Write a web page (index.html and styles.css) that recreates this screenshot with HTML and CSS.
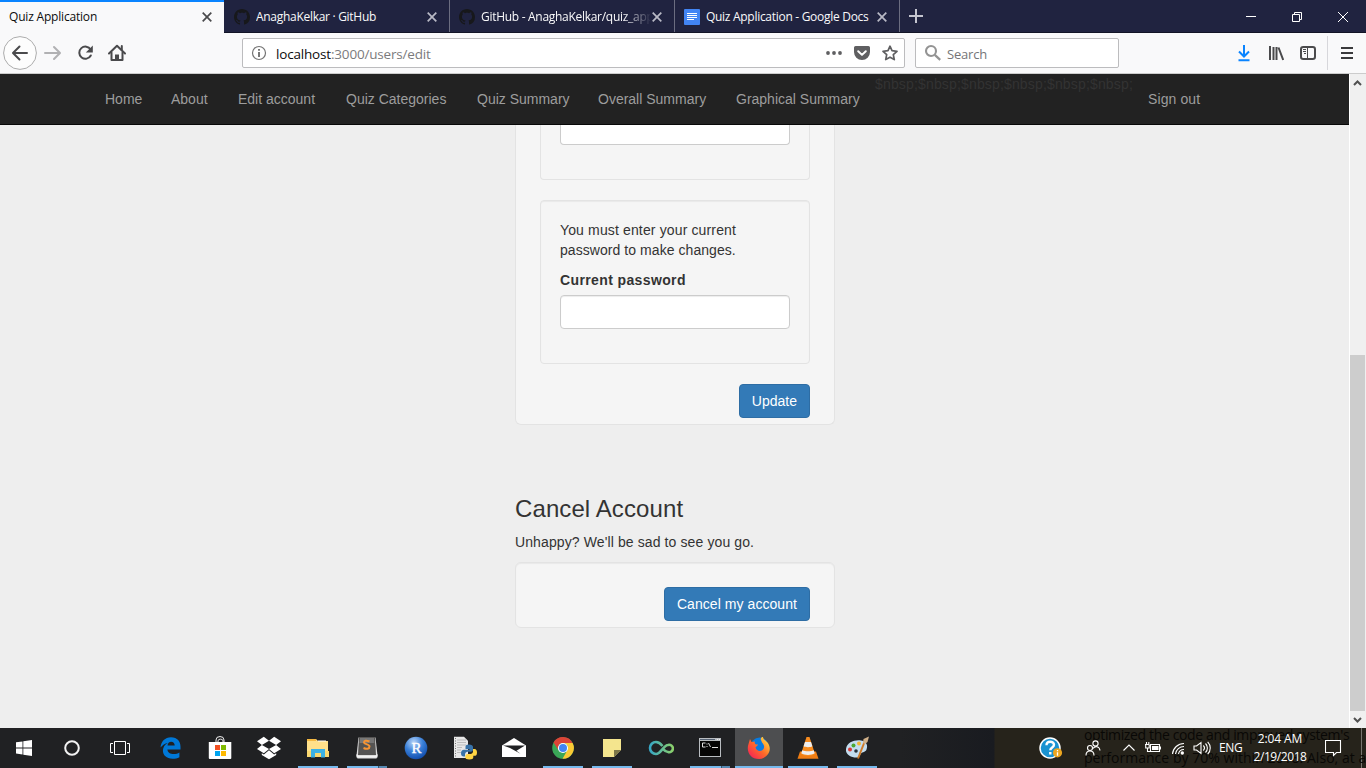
FILE: index.html
```html
<!DOCTYPE html>
<html lang="en">
<head>
<meta charset="utf-8">
<title>Quiz Application</title>
<link rel="stylesheet" href="styles.css">
</head>
<body>
<div class="desktop">
  <header class="tabstrip">
    <div class="tab tab-active"><span class="tab-title t1">Quiz Application</span><svg class="tab-close" width="10" height="10" viewBox="0 0 10 10"><path d="M.7.7l8.6 8.6M9.3.7L.7 9.3"/></svg></div>
    <div class="tab"><svg class="favicon" width="16" height="16" viewBox="0 0 16 16"><path class="octo" d="M8 0C3.58 0 0 3.58 0 8c0 3.54 2.29 6.53 5.47 7.59.4.07.55-.17.55-.38 0-.19-.01-.82-.01-1.49-2.01.37-2.53-.49-2.69-.94-.09-.23-.48-.94-.82-1.13-.28-.15-.68-.52-.01-.53.63-.01 1.08.58 1.23.82.72 1.21 1.87.87 2.33.66.07-.52.28-.87.51-1.07-1.78-.2-3.64-.89-3.64-3.95 0-.87.31-1.59.82-2.15-.08-.2-.36-1.02.08-2.12 0 0 .67-.21 2.2.82.64-.18 1.32-.27 2-.27s1.36.09 2 .27c1.53-1.04 2.2-.82 2.2-.82.44 1.1.16 1.92.08 2.12.51.56.82 1.27.82 2.15 0 3.07-1.87 3.75-3.65 3.95.29.25.54.73.54 1.48 0 1.07-.01 1.93-.01 2.2 0 .21.15.46.55.38A8.01 8.01 0 0 0 16 8c0-4.42-3.58-8-8-8z"/></svg><span class="tab-title t2">AnaghaKelkar · GitHub</span><svg class="tab-close" width="10" height="10" viewBox="0 0 10 10"><path d="M.7.7l8.6 8.6M9.3.7L.7 9.3"/></svg></div>
    <div class="tab"><svg class="favicon" width="16" height="16" viewBox="0 0 16 16"><path class="octo" d="M8 0C3.58 0 0 3.58 0 8c0 3.54 2.29 6.53 5.47 7.59.4.07.55-.17.55-.38 0-.19-.01-.82-.01-1.49-2.01.37-2.53-.49-2.69-.94-.09-.23-.48-.94-.82-1.13-.28-.15-.68-.52-.01-.53.63-.01 1.08.58 1.23.82.72 1.21 1.87.87 2.33.66.07-.52.28-.87.51-1.07-1.78-.2-3.64-.89-3.64-3.95 0-.87.31-1.59.82-2.15-.08-.2-.36-1.02.08-2.12 0 0 .67-.21 2.2.82.64-.18 1.32-.27 2-.27s1.36.09 2 .27c1.53-1.04 2.2-.82 2.2-.82.44 1.1.16 1.92.08 2.12.51.56.82 1.27.82 2.15 0 3.07-1.87 3.75-3.65 3.95.29.25.54.73.54 1.48 0 1.07-.01 1.93-.01 2.2 0 .21.15.46.55.38A8.01 8.01 0 0 0 16 8c0-4.42-3.58-8-8-8z"/></svg><span class="tab-title fade t3">GitHub - AnaghaKelkar/quiz_app</span><svg class="tab-close" width="10" height="10" viewBox="0 0 10 10"><path d="M.7.7l8.6 8.6M9.3.7L.7 9.3"/></svg></div>
    <div class="tab"><svg class="favicon" width="16" height="16" viewBox="0 0 16 16"><rect width="16" height="16" rx="1" fill="#4285f4"/><path d="M3 4.500h10M3 6.500h10M3 8.500h10M3 10.500h7" stroke="#fff"/></svg><span class="tab-title t4">Quiz Application - Google Docs</span><svg class="tab-close" width="10" height="10" viewBox="0 0 10 10"><path d="M.7.7l8.6 8.6M9.3.7L.7 9.3"/></svg></div>
    <svg class="new-tab" width="14" height="14" viewBox="0 0 14 14"><path d="M7 0v14M0 7h14" stroke="#c4c5d0" stroke-width="2"/></svg>
    <div class="window-controls">
      <svg width="46" height="32" viewBox="0 0 46 32"><path d="M18 16.500h10"/></svg>
      <svg width="46" height="32" viewBox="0 0 46 32"><path d="M18.500 14.500h7v7h-7zM20.500 14v-1.500h7v7H26"/></svg>
      <svg width="46" height="32" viewBox="0 0 46 32"><path d="M18 12l10 10M28 12l-10 10"/></svg>
    </div>
  </header>

  <div class="toolbar">
    <div class="nav-buttons">
      <svg width="34" height="34" viewBox="0 0 34 34"><circle cx="17" cy="17" r="16.400" fill="#fdfdfd" stroke="#acacac"/><path d="M24 17H10.500M16.500 10.500L10 17l6.500 6.500" class="ink"/></svg>
      <svg width="32" height="34" viewBox="0 0 32 34"><path d="M8 17h14.500M17 11l6 6-6 6" class="ink pale"/></svg>
      <svg width="32" height="34" viewBox="0 0 32 34"><path d="M21.600 13.500A6.100 6.100 0 1 0 21.800 19.500" class="ink"/><path d="M23.800 9.500v7h-7z" fill="#4a4a4c"/></svg>
      <svg width="32" height="34" viewBox="0 0 32 34"><path d="M8 17.500L16 9.800l8 7.700" class="ink"/><path d="M10.500 16.500v7.500h11v-7.500M20.800 10v4" class="ink"/><path d="M14 18.500h4V24h-4z" fill="#4a4a4c"/></svg>
    </div>
    <div class="urlbar">
      <svg width="16" height="16" viewBox="0 0 16 16"><circle cx="8" cy="8" r="6.500" fill="none" stroke="#737373" stroke-width="1.200"/><path d="M8 4v1.700M8 7v5" stroke="#606060" stroke-width="1.700"/></svg>
      <span class="address"><b>localhost</b>:3000/users/edit</span>
      <div class="url-actions">
        <svg width="16" height="16" viewBox="0 0 16 16"><g fill="#5f5f61"><circle cx="2" cy="8" r="1.900"/><circle cx="8" cy="8" r="1.900"/><circle cx="14" cy="8" r="1.900"/></g></svg>
        <svg width="16" height="16" viewBox="0 0 16 16"><path d="M1.600 1h12.800A1.600 1.600 0 0 1 16 2.600V7a8 8 0 0 1-16 0V2.600A1.600 1.600 0 0 1 1.600 1z" fill="#5f5f61"/><path d="M4.200 6.200L8 9.900l3.800-3.700" fill="none" stroke="#fff" stroke-width="2" stroke-linecap="round" stroke-linejoin="round"/></svg>
        <svg width="16" height="16" viewBox="0 0 16 16"><path d="M8 1.200l2 4.500 5 .6-3.700 3.300 1 5L8 12.200l-4.300 2.400 1-5L1 6.300l5-.6z" fill="none" stroke="#5f5f61" stroke-width="1.700" stroke-linejoin="round"/></svg>
      </div>
    </div>
    <div class="searchbar">
      <svg width="18" height="18" viewBox="0 0 18 18"><circle cx="7" cy="7" r="5" fill="none" stroke="#939393" stroke-width="2.100"/><path d="M10.800 10.800l5.400 5" stroke="#939393" stroke-width="2.300"/></svg>
      <span>Search</span>
    </div>
    <div class="tools">
      <svg width="16" height="18" viewBox="0 0 16 18"><path d="M8 1v11M3 7.500l5 5 5-5M2.500 16.200h11" fill="none" stroke="#0a84ff" stroke-width="2"/></svg>
      <svg width="16" height="18" viewBox="0 0 16 18"><path d="M2 2v14M5.500 3v13M8.500 3v13M10.500 3.500L15.200 16" fill="none" stroke="#4a4a4c" stroke-width="2"/></svg>
      <svg width="16" height="18" viewBox="0 0 16 18"><rect x="1" y="3" width="14" height="12" rx="2.200" fill="none" stroke="#4a4a4c" stroke-width="2"/><path d="M7.500 3v12M3 5.500h3M3 7.500h3M4 9.500h2" stroke="#4a4a4c"/></svg>
    </div>
    <div class="menu-button"><svg width="14" height="14" viewBox="0 0 14 14"><path d="M1 2h12M1 7h12M1 12h12" stroke="#3a3a3c" stroke-width="2"/></svg></div>
  </div>

  <div class="viewport">
    <div class="page">
      <nav class="navbar">
        <a class="n1">Home</a><a class="n2">About</a><a class="n3">Edit account</a><a class="n4">Quiz Categories</a><a class="n5">Quiz Summary</a><a class="n6">Overall Summary</a><a class="n7">Graphical Summary</a><span class="stray">$nbsp;$nbsp;$nbsp;$nbsp;$nbsp;$nbsp;</span><a class="n8">Sign out</a>
      </nav>
      <main class="content">
        <section class="panel panel-form">
          <div class="well well-cut"><div class="input input-cut"></div></div>
          <div class="well">
            <p>You must enter your current<br>password to make changes.</p>
            <label>Current password</label>
            <div class="input"></div>
          </div>
          <button class="btn">Update</button>
        </section>
        <h3>Cancel Account</h3>
        <p class="sad">Unhappy? We'll be sad to see you go.</p>
        <section class="panel panel-cancel"><button class="btn btn-cancel">Cancel my account</button></section>
      </main>
    </div>
    <div class="scrollbar">
      <svg width="15" height="17" viewBox="0 0 15 17"><path d="M4 11l3.500-3.500L11 11"/></svg>
      <div class="thumb"></div>
      <svg width="15" height="17" viewBox="0 0 15 17"><path d="M4 7l3.500 3.500L11 7"/></svg>
    </div>
  </div>

  <footer class="taskbar">
    <div class="start-group">
      <div class="slot"><svg width="16" height="16" viewBox="0 0 16 16"><path d="M0 2.300l6.500-.9v6.100H0zM7.300 1.300L16 0v7.500H7.300zM0 8.400h6.500v6.100L0 13.600zM7.300 8.400H16V16l-8.700-1.300z" fill="#fff"/></svg></div>
      <div class="slot"><svg width="16" height="16" viewBox="0 0 16 16"><circle cx="8" cy="8" r="6.800" fill="none" stroke="#f2f2f2" stroke-width="2"/></svg></div>
      <div class="slot"><svg width="20" height="16" viewBox="0 0 20 16"><path d="M4.500 1.500h11v13h-11zM3 3.500H.5v9H3M17 3.500h2.500v9H17" fill="none" stroke="#fff"/></svg></div>
    </div>
    <div class="app-group">
      <div class="slot"><svg width="24" height="24" viewBox="0 0 24 24"><path d="M1.500 11.500C2.200 5.500 6 1.300 12 1.300c6.500 0 9.500 4.500 9.500 9.400v2.800H8.400c.2 3.200 3 4.500 6.200 4.500 2.400 0 4.200-.6 5.800-1.600v4.800c-2 1.100-4.200 1.600-6.900 1.600-6 0-9.600-3.500-9.600-8.200 0-3.400 2-6.100 5-7.600-3 .4-5.500 2.200-7.400 4.500zm7-2h7.200c0-2.500-1.400-3.800-3.600-3.800-2 0-3.300 1.500-3.600 3.800z" fill="#0078d7"/></svg></div>
      <div class="slot"><svg width="24" height="24" viewBox="0 0 24 24"><path d="M8 6V4a4 3.500 0 0 1 8 0v2M10 6V4.500a3 3 0 0 1 5 0V6" fill="none" stroke="#eee"/><path d="M.8 6h22.500v16a1 1 0 0 1-1 1H1.800a1 1 0 0 1-1-1z" fill="#fff"/><path d="M7 9h5v5H7z" fill="#f25022"/><path d="M13 9h5v5h-5z" fill="#7fba00"/><path d="M7 15h5v5H7z" fill="#00a4ef"/><path d="M13 15h5v5h-5z" fill="#ffb900"/></svg></div>
      <div class="slot"><svg width="24" height="24" viewBox="0 0 24 24"><path d="M6.800.8L0 5.200 4.900 9 12 4.800zM17.200.8L12 4.800 19.100 9 24 5.200zM4.900 9L0 12.900l6.800 4.400L12 13zM19.100 9L12 13l5.200 4.300L24 12.900zM12 14.300l-5.100 4.200-2.100-1.300v1.700l7.200 4.300 7.200-4.300v-1.700l-2.100 1.300z" fill="#fff"/></svg></div>
      <div class="slot run"><svg width="24" height="24" viewBox="0 0 24 24"><path d="M1 3h9l2 2h10v16H1z" fill="#ffe08a"/><path d="M1 5V3h9v2z" fill="#f5b942"/><path d="M12 5h8" stroke="#fff"/><path d="M1 15h22v6H1z" fill="#fad870"/><path d="M5 13h14v8.500h-4V17H9v4.500H5z" fill="#3bb1e5"/></svg></div>
      <div class="slot run multi"><svg width="24" height="24" viewBox="0 0 24 24"><path d="M3.500 1.500h17l2 18-1 3h-19l-1-3z" fill="#ddd"/><path d="M4 1h16l1 18H3z" fill="#555453"/><path d="M5 2h14l.3 5H4.600z" fill="#777"/><path d="M1.500 18l2 2h17l2-2v3.500h-21z" fill="#f3f3f3"/><path d="M14.500 5.500C11 4 9 4.700 9 6.500s5.500 1.500 5.500 4-3 2.800-6 1.500" fill="none" stroke="#f79433" stroke-width="2"/></svg></div>
      <div class="slot"><svg width="24" height="24" viewBox="0 0 24 24"><defs><radialGradient id="rg" cx=".4" cy=".25" r=".8"><stop offset="0" stop-color="#b9d5f8"/><stop offset=".5" stop-color="#3a80d8"/><stop offset="1" stop-color="#0d48a8"/></radialGradient></defs><circle cx="12" cy="12" r="11.300" fill="url(#rg)"/><text x="12.500" y="17" text-anchor="middle" class="r-letter">R</text></svg></div>
      <div class="slot"><svg width="24" height="24" viewBox="0 0 24 24"><path d="M1 .8h10l4 4V22H1z" fill="#e8e8e8"/><path d="M2.500 2v19" stroke="#777" stroke-dasharray="1 1.500"/><path d="M4 4h9M4 6.500h9M4 9h9M4 11.500h5M4 14h4M4 16.500h4" stroke="#aaa" stroke-width=".7"/><path d="M16 8.500c-3 0-3.500 1-3.500 2.500v2h4v.8H11c-2 0-3 1.300-3 3.500s1 3.200 2.800 3.200h1.200v-2c0-1.500 1.200-2.700 2.700-2.700h3c1.300 0 2.300-1 2.300-2.300V11c0-1.600-1.500-2.500-4-2.500z" fill="#3872a8"/><path d="M20 13v2.500c0 1.500-1.200 2.500-2.500 2.500h-3c-1.300 0-2.200 1-2.200 2.300v1.200c0 1.200 1.500 2 4 2 2.700 0 4-.8 4-2.200v-1.500h2c1 0 1.700-1.300 1.700-3.300S23 13 21.700 13z" fill="#ffd544"/></svg></div>
      <div class="slot"><svg width="24" height="24" viewBox="0 0 24 24"><path d="M0 9.500L12 2l12 7.500V21H0z" fill="#fff"/><path d="M1 9.500h22l-8.500 5.200 4 3L8 12z" fill="#202123"/></svg></div>
      <div class="slot run"><svg width="24" height="24" viewBox="0 0 24 24"><circle cx="12" cy="12" r="10.800" fill="#3aa757"/><path d="M2.500 6.500A10.800 10.800 0 0 1 21.600 7H12a5 5 0 0 0-4.300 7.500z" fill="#dc4437"/><path d="M21.600 7A10.800 10.800 0 0 1 11.500 22.800L16.500 14A5 5 0 0 0 12 7z" fill="#fbc934"/><circle cx="12" cy="12" r="5.100" fill="#fff"/><circle cx="12" cy="12" r="4" fill="#4285f4"/></svg></div>
      <div class="slot run"><svg width="24" height="24" viewBox="0 0 24 24"><path d="M3 3h18v11l-7 7H3z" fill="#f4e58e"/><path d="M21 14l-7 7v-7z" fill="#7c7648"/></svg></div>
      <div class="slot"><svg width="26" height="24" viewBox="0 0 26 24"><defs><linearGradient id="inf"><stop stop-color="#38a8c5"/><stop offset="1" stop-color="#8bd06b"/></linearGradient></defs><path d="M14.500 10c-2-2.500-4-4-6.500-4a5.800 5.800 0 1 0 0 12c5 0 7.500-9 12-9a3.700 3.700 0 1 1 0 7c-2.500 0-3.700-1.500-5-3" fill="none" stroke="url(#inf)" stroke-width="2.600"/></svg></div>
      <div class="slot run multi"><svg width="24" height="24" viewBox="0 0 24 24"><path d="M1 2h22v19H1z" fill="#b9bdc1"/><path d="M2 5h20v15H2z" fill="#050505"/><path d="M2 3.500h15" stroke="#566374"/><path d="M19 3.500h3" stroke="#eee" stroke-dasharray="1 1"/><path d="M7.500 7h-3v4h3M9 7.500v1M9 10v1M10.500 7l2 4M14 11.500h6" fill="none" stroke="#ddd"/></svg></div>
      <div class="slot run active"><svg width="24" height="24" viewBox="0 0 24 24"><defs><linearGradient id="fx" x1="0" y1="1" x2="1" y2="0"><stop stop-color="#f3145f"/><stop offset=".5" stop-color="#ff6a28"/><stop offset="1" stop-color="#fff044"/></linearGradient></defs><circle cx="12.500" cy="10.500" r="9" fill="#087be0"/><path d="M3 3l1.500 3L8 5.500c-1 2 .5 3 3 3-.5 2-2 1.500-2.500 3 1 4 6 4.500 8 1.500 1.500-2.500 0-5-1.500-6.500L14 4c-1-2 1-3 2-3 0 2.500 2.500 3 4.500 5.500 6 8-1 16.500-8.500 16.500C3 23-1 15 1.500 8z" fill="url(#fx)"/></svg></div>
      <div class="slot run"><svg width="24" height="24" viewBox="0 0 24 24"><path d="M4 15.500h16l2.500 7.300h-21z" fill="#ef7d13"/><path d="M10.500 1h3l5.500 17c-3 2.500-11 2.500-14 0z" fill="#f78c1f"/><path d="M9 6h6l1.400 4.300c-2 1.200-6.800 1.200-8.800 0zM6.300 14.300c3 1.400 8.400 1.400 11.400 0l1 3c-3.500 2.300-10 2.300-13.400 0z" fill="#eee"/></svg></div>
      <div class="slot run"><svg width="24" height="24" viewBox="0 0 24 24"><path d="M1 13C2 6 10 3.500 16 4.500c6 1 7 5 5.500 9-1 3-4 2-5.500 4s-1 4-5 4S0 19 1 13z" fill="#c3ddef"/><circle cx="5" cy="13.500" r="2" fill="#d83b36"/><circle cx="8.500" cy="9.500" r="2" fill="#4aa832"/><circle cx="14" cy="7.500" r="2" fill="#f2b535"/><circle cx="11" cy="15" r="1.800" fill="#25323c"/><path d="M19.500 6L13 22.500" stroke="#ce7b28" stroke-width="2"/><path d="M18 7l.5-4L24 .5 22.500 6 20 8z" fill="#d2b28a"/></svg></div>
    </div>
    <div class="tray">
      <div class="behind"><span class="b1">optimized the code and improved system's</span><span class="b2">performance by 70% within 2018. Also, at a</span></div>
      <svg class="help" width="24" height="24" viewBox="0 0 24 24"><circle cx="11" cy="12" r="10" fill="#1a93d1" stroke="#fff" stroke-width="1.500"/><path d="M7.500 9.300c0-5 7.500-4.500 7.500-.5 0 2.700-3.700 2.700-3.700 5.500M11.300 16v2.500" fill="none" stroke="#fff" stroke-width="2.400"/><circle cx="18.500" cy="16.800" r="4.600" fill="#eda620"/><path d="M18.500 14v1.300M18.500 16.300v3.400" stroke="#fff" stroke-width="1.300"/></svg>
      <svg class="people" width="16" height="16" viewBox="0 0 16 16"><g class="tray-line"><circle cx="10.500" cy="3.500" r="2.600"/><circle cx="5" cy="8" r="2.500"/><path d="M1 15.500c0-6 8-6 8 0M8 8.500C10 5.500 14.500 6 15 10.500"/></g></svg>
      <svg class="chev" width="12" height="12" viewBox="0 0 12 12"><path d="M.5 8.500L6 3l5.500 5.500" class="tray-line"/></svg>
      <svg class="battery" width="16" height="16" viewBox="0 0 16 16"><path d="M5.500 4.500h9v7h-9zM0 4.500h4.500M1.500 4.500V2M3.800 4.500V2M.7 5v3h3.500V5M2.500 8v3.500h3" class="tray-line"/><path d="M7 6h6.500v4H7z" fill="#fff"/><path d="M15.500 6.500v3" stroke="#fff"/></svg>
      <svg class="wifi" width="15" height="16" viewBox="0 0 15 16"><path d="M1.500 14A11.500 11.500 0 0 1 13 3.500M4.500 14A8.500 8.500 0 0 1 13 6.500M7.500 14A5.500 5.500 0 0 1 13 9.500" class="tray-line"/><circle cx="11.300" cy="13" r="1.700" fill="#fff"/></svg>
      <svg class="sound" width="18" height="16" viewBox="0 0 18 16"><path d="M1 6h2.500L8 2.500v11L3.500 10H1zM10.300 5.500c1.500 1.500 1.500 3.500 0 5M12.500 3.500c2.500 2.500 2.500 6.500 0 9M14.700 1.800c3.400 3.600 3.400 8.800 0 12.400" class="tray-line"/></svg>
      <span class="lang">ENG</span>
      <div class="clock"><span class="time">2:04 AM</span><span class="date">2/19/2018</span></div>
      <svg class="notify" width="17" height="17" viewBox="0 0 17 17"><path d="M.5.500h15v12h-4l-3 3v-3h-8z" class="tray-line"/></svg>
      <div class="peek"></div>
    </div>
  </footer>
</div>
</body>
</html>
```
FILE: styles.css
```css
* { box-sizing: border-box; }
body { margin: 0; overflow: hidden; }
svg { display: block; flex: none; }
.desktop { width: 1366px; height: 768px; display: flex; flex-direction: column; font: 12px/16px "Open Sans", "Noto Sans", sans-serif; }

/* Tabs */
.tabstrip { height: 33px; display: flex; background: #202340; border-bottom: 1px solid #121426; flex: none; }
.tab { width: 225px; height: 32px; display: flex; align-items: center; padding: 2px 12px 0 9px; border-right: 1px solid #6b6d80; color: #f9f9fa; }
.tab-active { width: 224px; height: 33px; margin-right: 1px; padding: 0 12px 1px 9px; border-right: 0; border-top: 2px solid #0a84ff; background: #f9f9fa; color: #0c0c0d; }
.tab-title { flex: 1; white-space: nowrap; overflow: hidden; letter-spacing: -.29px; }
.t1 { letter-spacing: -.19px; }
.favicon { margin-right: 6px; }
.octo { fill: #17181b; }
.tab-close { margin-left: 2px; fill: none; stroke: #b9bac6; stroke-width: 1.7; }
.tab-active .tab-close { stroke: #4a4a4c; }
.fade { mask-image: linear-gradient(90deg, #000 84%, transparent 101%); }
.new-tab { margin: 9px 0 0 9px; }
.window-controls { display: flex; margin-left: auto; fill: none; stroke: #fff; }

/* Toolbar */
.toolbar { height: 41px; display: flex; align-items: center; flex: none; background: #f9f9fa; border-bottom: 1px solid #ccc; }
.nav-buttons { display: flex; width: 242px; padding-left: 3px; }
.ink { fill: none; stroke: #4a4a4c; stroke-width: 2; stroke-linecap: round; stroke-linejoin: round; }
.pale { stroke: #b1b1b3; }
.urlbar, .searchbar { height: 30px; display: flex; align-items: center; background: #fff; border: 1px solid #bcbcbe; border-radius: 2px; }
.urlbar { width: 663px; padding: 0 6px 0 8px; }
.address { margin-left: 9px; padding-top: 2px; color: #7b7b7d; font-size: 13.500px; letter-spacing: -.18px; }
.address b { color: #0c0c0d; font-weight: 400; }
.url-actions { display: flex; gap: 12px; margin-left: auto; }
.searchbar { width: 204px; margin-left: 10px; padding-left: 8px; color: #757577; font-size: 13px; }
.searchbar span { margin-left: 5px; padding-top: 2px; letter-spacing: -.2px; }
.tools { display: flex; gap: 16px; margin-left: 117px; }
.menu-button { height: 34px; display: flex; align-items: center; margin-left: 11px; padding-left: 12px; border-left: 1px solid #d7d7db; }

/* Page */
.viewport { height: 654px; display: flex; flex: none; background: #eee; }
.page { width: 1349px; font: 14px/20px "Liberation Sans", Arial, sans-serif; color: #333; }
.navbar { height: 51px; display: flex; padding-left: 90px; background: #222; border-bottom: 1px solid #080808; color: #9d9d9d; white-space: nowrap; }
.navbar a { padding: 15px 0 0 15px; }
.n1 { width: 66px; } .n2 { width: 67px; } .n3 { width: 108px; } .n4 { width: 131px; }
.n5 { width: 121px; } .n6 { width: 138px; } .n7 { width: 154px; }
.n8 { letter-spacing: .1px; }
.stray { width: 258px; color: #333; letter-spacing: .16px; }
.content { width: 320px; margin-left: 515px; }
.panel { background: #f5f5f5; border: 1px solid #e3e3e3; border-radius: 6px; display: flex; flex-direction: column; align-items: flex-end; }
.panel-form { height: 300px; padding: 0 24px; border-top: 0; border-radius: 0 0 6px 6px; }
.well { width: 270px; height: 164px; padding: 19px; margin-bottom: 20px; border: 1px solid #e3e3e3; border-radius: 4px; box-shadow: inset 0 1px 1px rgba(0,0,0,.05); }
.well-cut { height: 55px; padding-top: 0; border-top: 0; border-radius: 0 0 4px 4px; box-shadow: none; }
.well p { margin: 0 0 10px; letter-spacing: .06px; }
.well p::first-line { letter-spacing: .14px; }
.well label { display: block; margin-bottom: 5px; font-weight: 700; letter-spacing: .38px; }
.input { height: 34px; background: #fff; border: 1px solid #ccc; border-radius: 4px; box-shadow: inset 0 1px 1px rgba(0,0,0,.075); }
.input-cut { height: 20px; border-top: 0; border-radius: 0 0 4px 4px; box-shadow: none; }
.btn { height: 34px; padding: 0 12px; border: 1px solid #2e6da4; border-radius: 4px; background: #337ab7; color: #fff; font: inherit; white-space: nowrap; }
.btn-cancel { letter-spacing: .06px; }
h3 { margin: 71px 0 10px; font-size: 24px; line-height: 26px; font-weight: 500; letter-spacing: .1px; }
.sad { margin: 0 0 10px; letter-spacing: .11px; }
.panel-cancel { height: 66px; padding: 24px 24px 0; box-shadow: inset 0 1px 1px rgba(0,0,0,.05); }
.scrollbar { width: 17px; display: flex; flex-direction: column; padding-right: 1px; background: #f0f0f0; border-left: 1px solid #fff; }
.scrollbar svg { fill: none; stroke: #505050; stroke-width: 2; }
.thumb { height: 356px; margin-top: auto; background: #cdcdcd; }

/* Taskbar */
.taskbar { height: 40px; display: flex; flex: none; background: linear-gradient(90deg, #202123 0 900px, #191b20 994px, #26231b 995px); }
.start-group, .app-group { display: flex; }
.start-group { width: 147px; }
.app-group { gap: 1px; }
.slot { position: relative; width: 48px; height: 40px; display: flex; align-items: center; justify-content: center; }
.active { background: #4d4e50; }
.run::after { content: ""; position: absolute; left: 4px; right: 4px; bottom: 0; height: 2px; background: #76b9ed; }
.active::after { left: 0; right: 0; }
.multi::after { background: linear-gradient(90deg, #76b9ed 31px, #39566b 31px 32px, #5689b2 32px); }
.r-letter { font: 15px "Liberation Serif", serif; fill: #fff; stroke: #fff; stroke-width: .4px; }
.tray { position: relative; flex: 1; display: flex; align-items: center; color: #fff; padding-left: 158px; }
.tray > svg, .lang, .clock { position: relative; }
.tray-line { fill: none; stroke: #fff; stroke-width: 1.1; }
.behind { position: absolute; inset: 0 0 0 203px; overflow: hidden; font-size: 14px; line-height: 23px; color: #090806; white-space: nowrap; }
.behind span { display: block; }
.b1 { margin-top: -5px; letter-spacing: -.36px; }
.b2 { letter-spacing: .03px; }
.people { margin-left: 22px; }
.chev { margin-left: 22px; }
.battery { margin-left: 10px; }
.wifi { margin-left: 10px; }
.sound { margin-left: 7px; }
.lang { margin-left: 8px; width: 24px; letter-spacing: -.3px; }
.clock { width: 60px; margin-left: 7px; display: flex; flex-direction: column; align-items: center; line-height: 18px; }
.time { letter-spacing: -.1px; }
.date { letter-spacing: -.42px; }
.notify { margin-left: 15px; }
.peek { width: 1px; height: 40px; margin-left: auto; margin-right: 4px; background: #77756f; }
```
